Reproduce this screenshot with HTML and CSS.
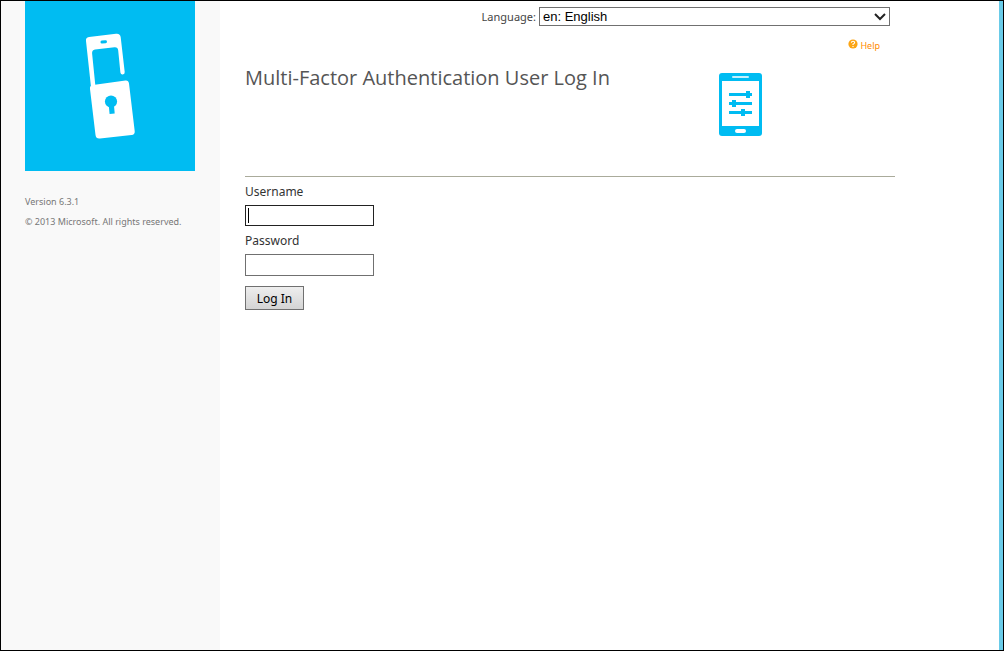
FILE: index.html
```html
<!DOCTYPE html>
<html lang="en">
<head>
<meta charset="utf-8">
<title>Multi-Factor Authentication User Log In</title>
<link rel="stylesheet" href="styles.css">
</head>
<body>
<div class="page">
  <aside class="sidebar">
    <div class="brand">
      <svg class="brand-icon" viewBox="0 0 170 170" aria-hidden="true">
        <path fill="#fff" d="M61 40Q60.500 36.500 64 36L91 32.800Q95.200 32.300 95.700 36.300L99.700 71Q99.900 73.300 97.800 73.500Q95.700 73.700 95.400 71.500L93.200 49.500Q92.800 46 89.500 46.300L70 48.500Q66.800 49 67.100 52.500L70.500 86H66Z"/>
        <path fill="#fff" d="M65 88Q64.500 84.500 68 84L100.500 79.500Q103.500 79.200 104 82.500L109.700 130Q110.200 133.600 106.500 134.100L75 137.500Q71 138 70.500 134Z"/>
        <rect x="75.500" y="39.300" width="6.500" height="3" rx="1.500" fill="#00bcf2" transform="rotate(-6 79 41)"/>
        <circle cx="86" cy="100.500" r="6.100" fill="#00bcf2"/>
        <path fill="#00bcf2" d="M83.700 104L88.900 103.500L89.700 112.500L84.600 113Z"/>
      </svg>
    </div>
    <p class="meta">Version 6.3.1</p>
    <p class="meta">© 2013 Microsoft. All rights reserved.</p>
  </aside>
  <main class="main">
    <div class="content">
      <div class="language">
        <label for="language">Language:</label>
        <div class="select-box">
          <select id="language"><option>en: English</option></select>
          <svg class="chevron" viewBox="0 0 12 8" aria-hidden="true"><path d="M1 1l5 5 5-5" fill="none" stroke="#222" stroke-width="2"/></svg>
        </div>
      </div>
      <a class="help" href="#help">
        <svg class="help-icon" viewBox="0 0 10 10" aria-hidden="true">
          <circle cx="5" cy="5" r="4.600" fill="#fca514"/>
          <path d="M3.300 3.800Q3.500 2.300 5 2.300Q6.700 2.300 6.600 3.700Q6.500 4.500 5 5.200V6" fill="none" stroke="#fff" stroke-width="1.100"/>
          <rect x="4.400" y="7" width="1.200" height="1.100" fill="#fff"/>
        </svg>
        <span>Help</span>
      </a>
      <header class="heading">
        <h1>Multi-Factor Authentication User Log In</h1>
        <svg class="device" viewBox="0 0 43 63" aria-hidden="true">
          <rect width="43" height="63" rx="3" fill="#00bcf2"/>
          <rect x="3" y="8" width="37" height="45" fill="#fff"/>
          <rect x="13" y="3" width="17" height="2" rx="1" fill="#c4f0fd"/>
          <rect x="16" y="56" width="11" height="4" rx="2" fill="#fff"/>
          <g fill="#00bcf2">
            <rect x="10" y="20" width="23" height="3"/><rect x="27" y="18" width="4" height="7"/>
            <rect x="10" y="29" width="23" height="3"/><rect x="13" y="27" width="4" height="7"/>
            <rect x="10" y="38" width="23" height="3"/><rect x="22" y="36" width="4" height="7"/>
          </g>
        </svg>
      </header>
      <form class="login">
        <label for="username">Username</label>
        <div class="field field-active"><input id="username" type="text" autocomplete="off"></div>
        <label for="password">Password</label>
        <div class="field"><input id="password" type="password"></div>
        <button type="button">Log In</button>
      </form>
    </div>
  </main>
</div>
</body>
</html>
```
FILE: styles.css
```css
* { box-sizing: border-box; }
body { margin: 0; background: #fff; font-family: "Segoe UI", "Noto Sans", "Open Sans", sans-serif; font-size: 12px; color: #333; }
.page { display: flex; min-height: 100vh; border: 1px solid #000; }
.sidebar { flex: none; width: 219px; padding: 0 24px; background: #f9f9f9; }
.brand { width: 170px; height: 170px; margin-bottom: 21px; background: #00bcf2; }
.brand-icon { display: block; width: 100%; }
.meta { margin: 0; font-size: 9px; line-height: 20px; color: #777; white-space: nowrap; }
.main { flex: 1; padding: 6px 24px 24px 25px; border-right: 4px solid #69cbe8; }
.content { display: flex; flex-direction: column; max-width: 650px; }
.language { display: flex; justify-content: flex-end; align-items: center; gap: 3px; padding-right: 5px; font-size: 11px; color: #444; }
.select-box { position: relative; width: 351px; }
select { display: block; width: 100%; height: 19px; padding: 0 3px; border: 1px solid #707070; border-radius: 0; background: #fff; appearance: none; font: 13px "Liberation Sans", Arial, sans-serif; color: #000; }
.chevron { position: absolute; top: 6px; right: 4px; width: 12px; height: 8px; pointer-events: none; }
.help { display: flex; align-self: flex-end; align-items: flex-start; gap: 2px; margin: 13px 15px 0 0; font-size: 9px; line-height: 14px; color: #ff8c00; text-decoration: none; }
.help-icon { width: 10px; height: 10px; }
.heading { display: grid; grid-template-columns: 474px auto; align-items: start; justify-content: start; height: 124px; padding-top: 20px; border-bottom: 1px solid #aaab9b; }
h1 { margin: -9px 0 0; font-family: "Segoe UI", "Open Sans", sans-serif; font-size: 20px; line-height: 28px; font-weight: 400; color: #555; white-space: nowrap; }
.device { width: 43px; height: 63px; }
.login { display: flex; flex-direction: column; align-items: flex-start; padding-top: 5px; }
.login label { line-height: 20px; }
.field { position: relative; width: 129px; margin: 3px 0 5px; }
.field input { display: block; width: 100%; height: 22px; padding: 1px 3px; border: 1px solid #707070; border-radius: 0; background: #fff; font: inherit; outline: none; }
.field-active input { border-color: #222; height: 21px; caret-color: transparent; }
.field-active::after { content: ""; position: absolute; left: 3px; top: 3px; width: 1px; height: 15px; background: #000; }
button { width: 59px; height: 24px; margin-top: 5px; padding: 0; border: 1px solid #707070; border-radius: 0; background: linear-gradient(#eee, #d4d4d4); font: inherit; color: #000; }
```
